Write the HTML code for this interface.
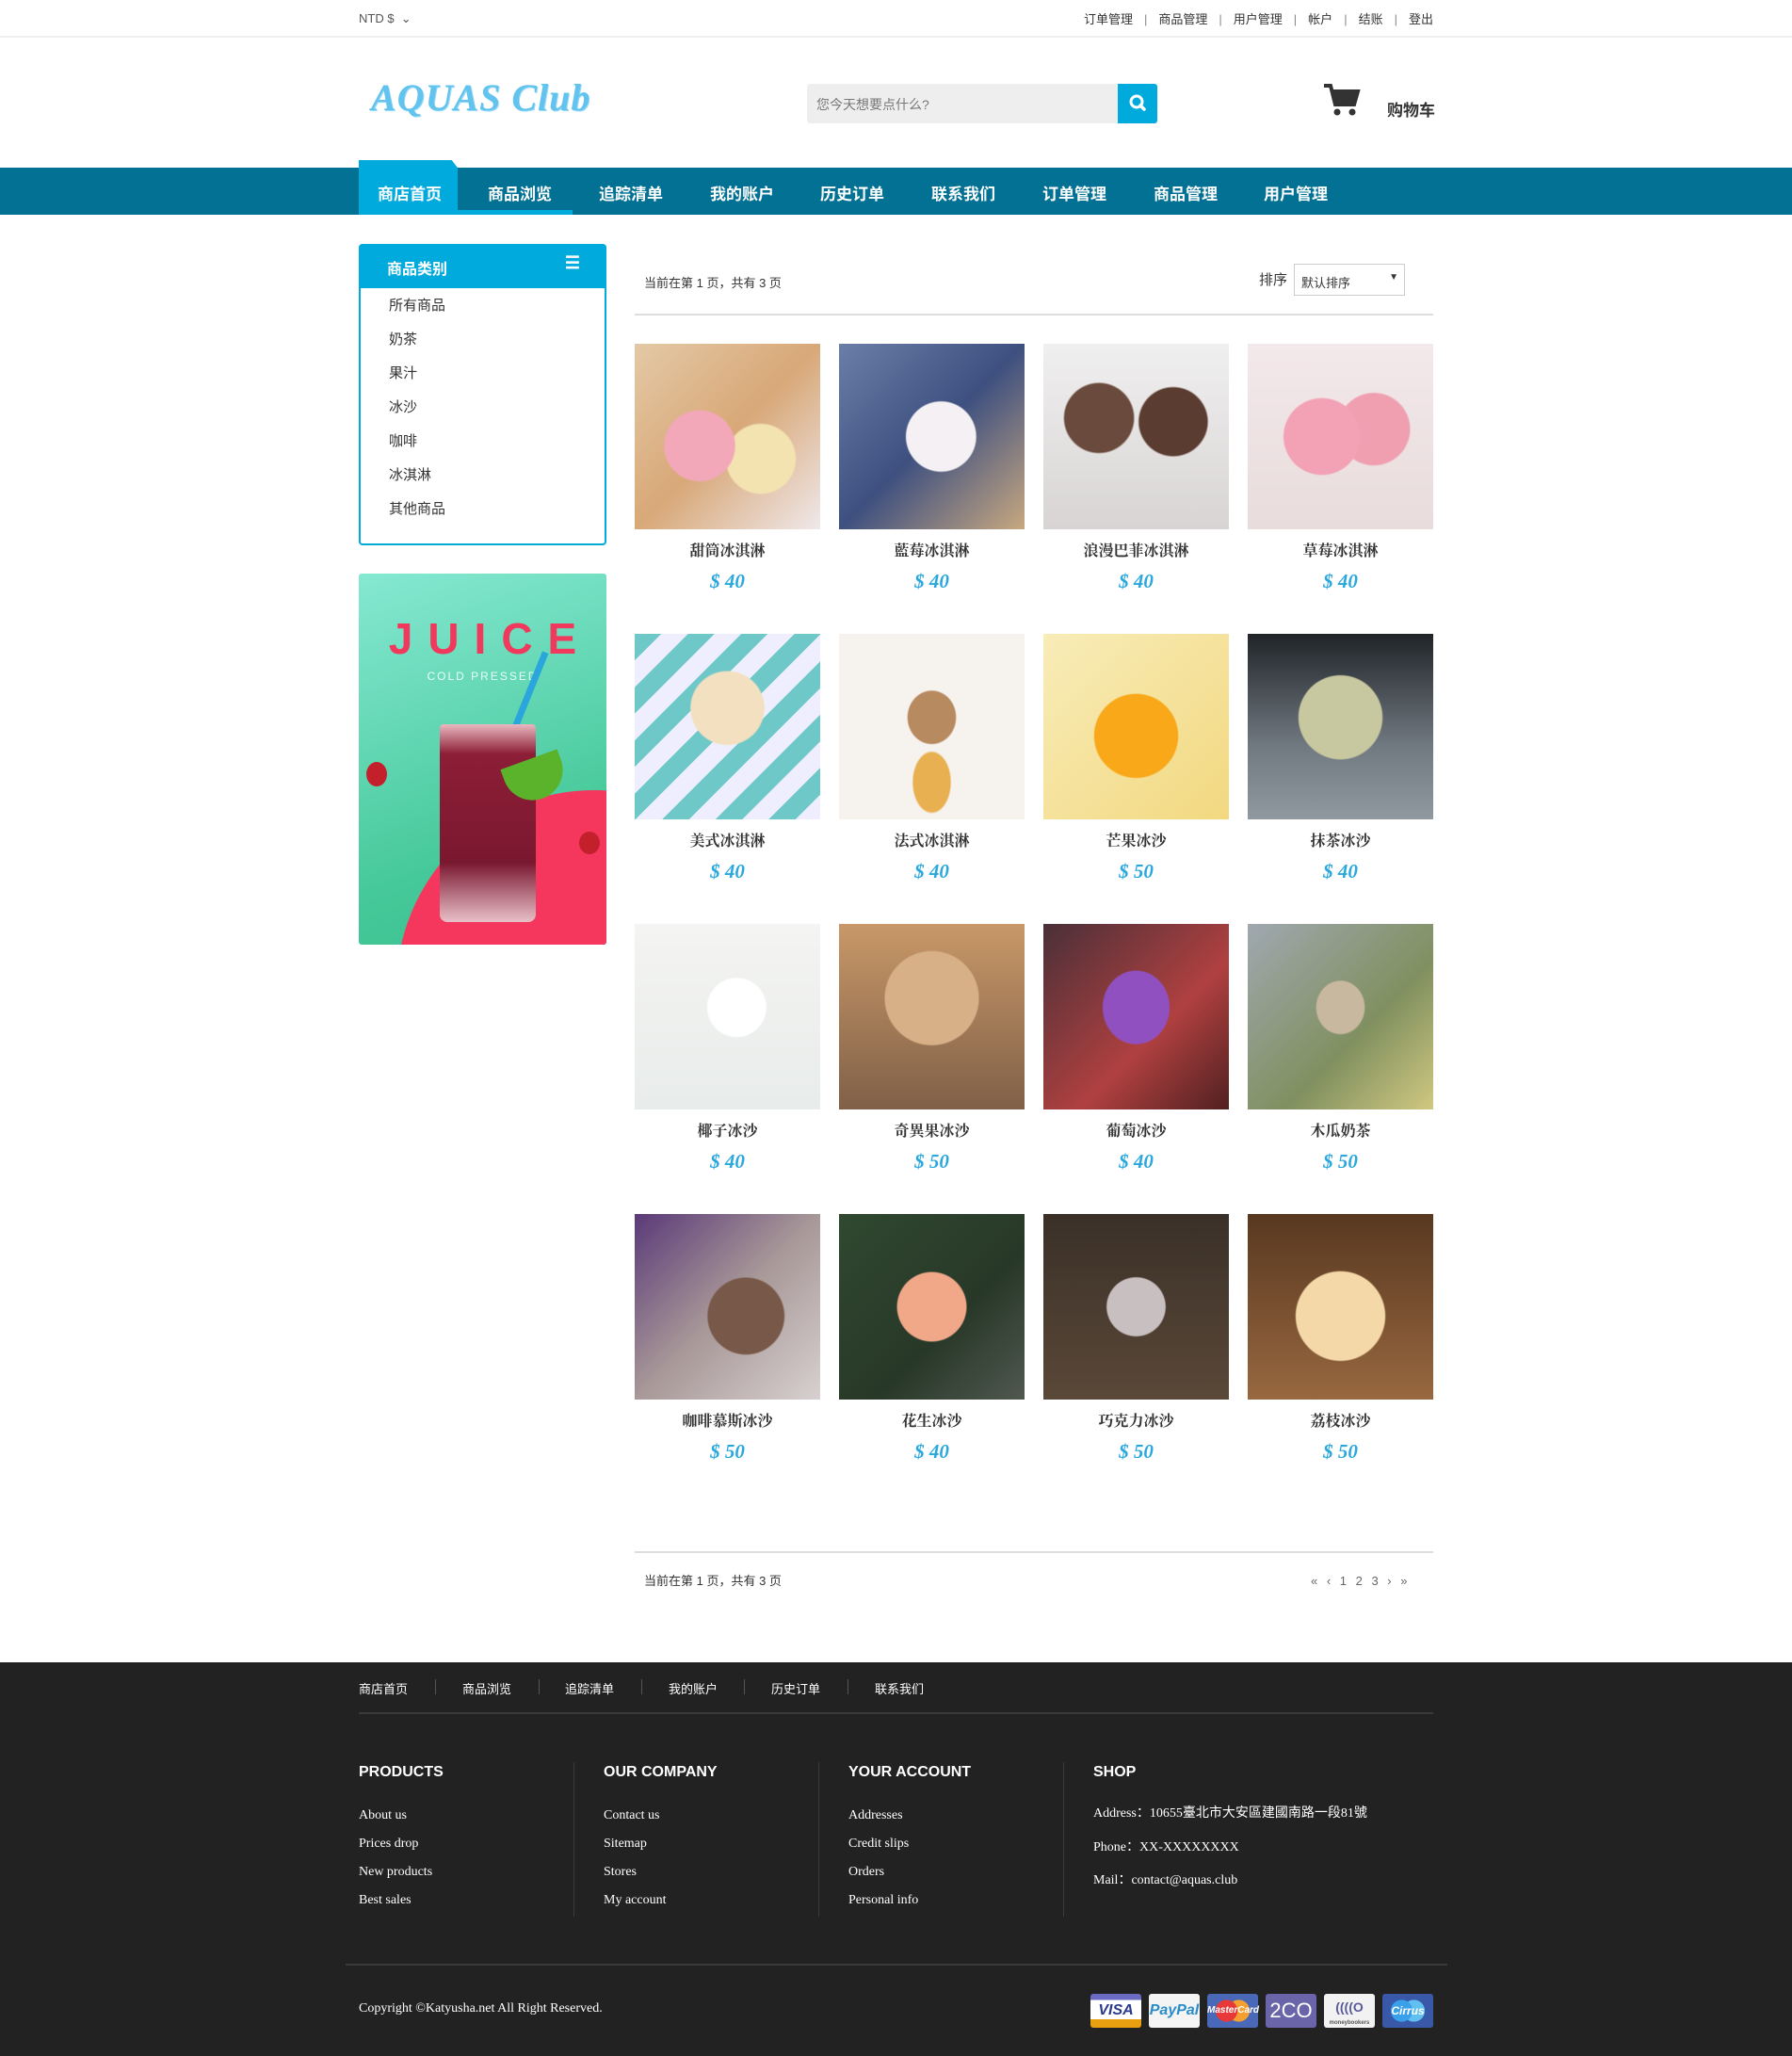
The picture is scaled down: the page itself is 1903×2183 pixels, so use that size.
<!DOCTYPE html>
<html><head><meta charset="utf-8">
<style>
*{margin:0;padding:0;box-sizing:border-box}
body{width:1903px;height:2183px;background:#fff;font-family:"Liberation Sans","Noto Sans CJK SC",sans-serif;color:#333;position:relative;overflow:hidden}
.abs{position:absolute}
.topbar{left:0;top:0;width:1903px;height:40px;border-bottom:2px solid #f0f0f0}
.logo{left:394px;top:80px;font-family:"Liberation Serif",serif;font-style:italic;font-weight:bold;font-size:40px;color:#62c4ee;letter-spacing:1px;text-shadow:1px 1px 0 #9ad9f5}
.search{left:857px;top:89px;width:330px;height:42px;background:#eee;border-radius:3px 0 0 3px;font-size:14px;color:#777;padding:12px 10px}
.sbtn{left:1187px;top:89px;width:42px;height:42px;background:#00aadd;border-radius:0 3px 3px 0}
.nav{left:0;top:178px;width:1903px;height:50px;background:#027194}
.navtab{left:381px;top:170px;width:105px;height:58px;background:#00aadd;clip-path:polygon(0 0,94% 0,100% 14%,100% 100%,0 100%)}
.navul{left:486px;top:223px;width:122px;height:5px;background:#00aadd}
.ni{top:192px;font-size:17px;font-weight:bold;color:#fff}
.side{left:381px;top:259px;width:263px;height:320px;border:2px solid #00aadd;border-radius:4px}
.sideh{left:381px;top:259px;width:263px;height:47px;background:#00aadd;border-radius:4px 4px 0 0;color:#fff;font-weight:bold;font-size:16px;padding:13px 0 0 30px}
.side li{list-style:none;position:absolute;left:30px;font-size:15px;color:#333}
.banner{left:381px;top:609px;width:263px;height:394px;border-radius:3px;overflow:hidden;background:linear-gradient(160deg,#86e8d2,#46c99a 70%,#3cc090)}
.ptxt{font-size:13px;color:#333}
.hr{height:2px;background:#ddd}
.prod{width:197px;height:197px}
.pname{width:197px;text-align:center;font-size:16px;color:#333;font-family:"Liberation Serif","Noto Serif CJK SC",serif;font-weight:bold}
.price{width:197px;text-align:center;font-family:"Liberation Serif",serif;font-style:italic;font-weight:bold;font-size:21px;color:#2aa8de}
.foot{left:0;top:1765px;width:1903px;height:418px;background:#222}
.fl{top:1783px;font-size:13px;color:#fff}
.fsep{top:1783px;width:1px;height:16px;background:#555}
.fh{top:1873px;font-size:16px;font-weight:bold;color:#fff}
.fi{font-family:"Liberation Serif",serif;font-size:14px;color:#fff}
.fdiv{top:1871px;width:1px;height:164px;background:#3a3a3a}
.pay{top:2117px;width:54px;height:36px;border-radius:3px;font-weight:bold;font-style:italic;text-align:center;line-height:36px;font-size:16px}
</style></head><body>

<div class="abs topbar"></div>
<div class="abs" style="left:381px;top:12px;font-size:13px;color:#555">NTD $ &nbsp;⌄</div>
<div class="abs" style="right:381px;top:10px;font-size:13px;color:#333">订单管理<span style="color:#888;margin:0 12px">|</span>商品管理<span style="color:#888;margin:0 12px">|</span>用户管理<span style="color:#888;margin:0 12px">|</span>帐户<span style="color:#888;margin:0 12px">|</span>结账<span style="color:#888;margin:0 12px">|</span>登出</div>

<div class="abs logo">AQUAS Club</div>
<div class="abs search">您今天想要点什么?</div>
<div class="abs sbtn"><svg width="42" height="42" viewBox="0 0 42 42"><circle cx="20" cy="19" r="6" fill="none" stroke="#fff" stroke-width="3"/><line x1="24" y1="23" x2="28" y2="27" stroke="#fff" stroke-width="3.5" stroke-linecap="round"/></svg></div>
<svg class="abs" style="left:1405px;top:88px" width="40" height="36" viewBox="0 0 40 36"><path d="M1 3h7l5 20h20l4-14H11" fill="none" stroke="#333" stroke-width="4"/><path d="M11 9h26l-4 14H13z" fill="#333"/><circle cx="15" cy="31" r="3.5" fill="#333"/><circle cx="31" cy="31" r="3.5" fill="#333"/></svg>
<div class="abs" style="left:1473px;top:103px;font-size:17px;font-weight:bold;color:#333">购物车</div>

<div class="abs nav"></div>
<div class="abs navtab"></div>
<div class="abs navul"></div>
<div class="abs ni" style="left:401px">商店首页</div>
<div class="abs ni" style="left:518px">商品浏览</div>
<div class="abs ni" style="left:636px">追踪清单</div>
<div class="abs ni" style="left:754px">我的账户</div>
<div class="abs ni" style="left:871px">历史订单</div>
<div class="abs ni" style="left:989px">联系我们</div>
<div class="abs ni" style="left:1107px">订单管理</div>
<div class="abs ni" style="left:1225px">商品管理</div>
<div class="abs ni" style="left:1342px">用户管理</div>

<div class="abs side"><ul>
<li style="top:52px">所有商品</li><li style="top:88px">奶茶</li><li style="top:124px">果汁</li><li style="top:160px">冰沙</li><li style="top:196px">咖啡</li><li style="top:232px">冰淇淋</li><li style="top:268px">其他商品</li></ul></div>
<div class="abs sideh">商品类别<span style="position:absolute;right:28px;top:10px;font-size:18px">☰</span></div>

<div class="abs banner">
<div class="abs" style="top:230px;width:420px;height:420px;border-radius:50%;background:#f5375e;left:40px"></div>
<div class="abs" style="left:0;top:42px;width:263px;text-align:center;font-size:46px;font-weight:bold;color:#f0395c;letter-spacing:16px;padding-left:16px">JUICE</div>
<div class="abs" style="left:0;top:102px;width:263px;text-align:center;font-size:12px;color:#e8fff6;letter-spacing:2px">COLD PRESSED</div>
<div class="abs" style="left:176px;top:80px;width:7px;height:100px;background:#2aa6dc;transform:rotate(22deg)"></div>
<div class="abs" style="left:86px;top:160px;width:102px;height:210px;background:linear-gradient(#e9b8c0 0,#8c1e36 15%,#7a1830 70%,#e8c0c8);border-radius:4px 4px 8px 8px"></div>
<div class="abs" style="left:156px;top:196px;width:64px;height:44px;border-radius:0 0 40px 40px;background:#5ab32a;transform:rotate(-20deg)"></div>
<div class="abs" style="left:8px;top:200px;width:22px;height:26px;border-radius:50%;background:#c4202c"></div>
<div class="abs" style="left:234px;top:274px;width:22px;height:24px;border-radius:50%;background:#c4202c"></div>
</div>

<div class="abs ptxt" style="left:684px;top:290px">当前在第 1 页，共有 3 页</div>
<div class="abs" style="left:1337px;top:286px;font-size:15px">排序</div>
<div class="abs" style="left:1374px;top:280px;width:118px;height:34px;border:1px solid #ccc;font-size:13px;padding:9px 7px">默认排序<span style="position:absolute;right:6px;top:8px;font-size:10px">▼</span></div>
<div class="abs hr" style="left:674px;top:333px;width:848px"></div>

<div class="abs prod" style="left:674px;top:365px;background:radial-gradient(circle at 35% 55%,#f2a8b8 0 22%,transparent 23%),radial-gradient(circle at 68% 62%,#f3e3b0 0 20%,transparent 21%),linear-gradient(135deg,#e4c9a6,#d8a878 50%,#efe8ea)"></div>
<div class="abs prod" style="left:891px;top:365px;background:radial-gradient(circle at 55% 50%,#f4f0f4 0 25%,transparent 26%),linear-gradient(135deg,#6b7ea8,#3e5080 50%,#c8a880)"></div>
<div class="abs prod" style="left:1108px;top:365px;background:radial-gradient(circle at 30% 40%,#6a4a3c 0 20%,transparent 21%),radial-gradient(circle at 70% 42%,#5a3c30 0 20%,transparent 21%),linear-gradient(#f0efef,#d8d4d4)"></div>
<div class="abs prod" style="left:1325px;top:365px;background:radial-gradient(circle at 40% 50%,#f2a2b4 0 26%,transparent 27%),radial-gradient(circle at 68% 46%,#ef9fb0 0 22%,transparent 23%),linear-gradient(#f3e8ea,#e8dcdc)"></div>

<div class="abs prod" style="left:674px;top:673px;background:radial-gradient(circle at 50% 40%,#f3e0c0 0 25%,transparent 26%),repeating-linear-gradient(135deg,#6fc8c8 0 20px,#eef 20px 40px)"></div>
<div class="abs prod" style="left:891px;top:673px;background:radial-gradient(ellipse at 50% 45%,#b88a60 0 18%,transparent 19%),radial-gradient(ellipse at 50% 80%,#e8b050 0 14%,transparent 15%),#f6f2ee"></div>
<div class="abs prod" style="left:1108px;top:673px;background:radial-gradient(circle at 50% 55%,#f8a818 0 30%,transparent 31%),linear-gradient(135deg,#f8ecb8,#f2d880)"></div>
<div class="abs prod" style="left:1325px;top:673px;background:radial-gradient(circle at 50% 45%,#c8c8a0 0 30%,transparent 31%),linear-gradient(#202428,#707880 60%,#9098a0)"></div>

<div class="abs prod" style="left:674px;top:981px;background:radial-gradient(ellipse at 55% 45%,#fff 0 20%,transparent 21%),linear-gradient(#f4f4f2,#e8ecea)"></div>
<div class="abs prod" style="left:891px;top:981px;background:radial-gradient(circle at 50% 40%,#d8b088 0 32%,transparent 33%),linear-gradient(#c89868,#806048)"></div>
<div class="abs prod" style="left:1108px;top:981px;background:radial-gradient(ellipse at 50% 45%,#9050c0 0 25%,transparent 26%),linear-gradient(135deg,#4a3038,#b04040 60%,#502020)"></div>
<div class="abs prod" style="left:1325px;top:981px;background:radial-gradient(ellipse at 50% 45%,#c8b8a0 0 18%,transparent 19%),linear-gradient(135deg,#a0a8b0,#809060 60%,#d0c880)"></div>

<div class="abs prod" style="left:674px;top:1289px;background:radial-gradient(circle at 60% 55%,#785848 0 25%,transparent 26%),linear-gradient(135deg,#5a3a78,#a89898 50%,#d8d0d0)"></div>
<div class="abs prod" style="left:891px;top:1289px;background:radial-gradient(ellipse at 50% 50%,#f0a888 0 26%,transparent 27%),linear-gradient(135deg,#304830,#283828 60%,#505850)"></div>
<div class="abs prod" style="left:1108px;top:1289px;background:radial-gradient(ellipse at 50% 50%,#c8c0c0 0 22%,transparent 23%),linear-gradient(#3a3028,#5a4838)"></div>
<div class="abs prod" style="left:1325px;top:1289px;background:radial-gradient(circle at 50% 55%,#f4d8a8 0 32%,transparent 33%),linear-gradient(#583820,#986840)"></div>

<div class="abs pname" style="left:674px;top:572px">甜筒冰淇淋</div><div class="abs price" style="left:674px;top:605px">$ 40</div>
<div class="abs pname" style="left:891px;top:572px">藍莓冰淇淋</div><div class="abs price" style="left:891px;top:605px">$ 40</div>
<div class="abs pname" style="left:1108px;top:572px">浪漫巴菲冰淇淋</div><div class="abs price" style="left:1108px;top:605px">$ 40</div>
<div class="abs pname" style="left:1325px;top:572px">草莓冰淇淋</div><div class="abs price" style="left:1325px;top:605px">$ 40</div>

<div class="abs pname" style="left:674px;top:880px">美式冰淇淋</div><div class="abs price" style="left:674px;top:913px">$ 40</div>
<div class="abs pname" style="left:891px;top:880px">法式冰淇淋</div><div class="abs price" style="left:891px;top:913px">$ 40</div>
<div class="abs pname" style="left:1108px;top:880px">芒果冰沙</div><div class="abs price" style="left:1108px;top:913px">$ 50</div>
<div class="abs pname" style="left:1325px;top:880px">抹茶冰沙</div><div class="abs price" style="left:1325px;top:913px">$ 40</div>

<div class="abs pname" style="left:674px;top:1188px">椰子冰沙</div><div class="abs price" style="left:674px;top:1221px">$ 40</div>
<div class="abs pname" style="left:891px;top:1188px">奇異果冰沙</div><div class="abs price" style="left:891px;top:1221px">$ 50</div>
<div class="abs pname" style="left:1108px;top:1188px">葡萄冰沙</div><div class="abs price" style="left:1108px;top:1221px">$ 40</div>
<div class="abs pname" style="left:1325px;top:1188px">木瓜奶茶</div><div class="abs price" style="left:1325px;top:1221px">$ 50</div>

<div class="abs pname" style="left:674px;top:1496px">咖啡慕斯冰沙</div><div class="abs price" style="left:674px;top:1529px">$ 50</div>
<div class="abs pname" style="left:891px;top:1496px">花生冰沙</div><div class="abs price" style="left:891px;top:1529px">$ 40</div>
<div class="abs pname" style="left:1108px;top:1496px">巧克力冰沙</div><div class="abs price" style="left:1108px;top:1529px">$ 50</div>
<div class="abs pname" style="left:1325px;top:1496px">荔枝冰沙</div><div class="abs price" style="left:1325px;top:1529px">$ 50</div>

<div class="abs hr" style="left:674px;top:1647px;width:848px"></div>
<div class="abs ptxt" style="left:684px;top:1668px">当前在第 1 页，共有 3 页</div>
<div class="abs" style="left:1392px;top:1671px;font-size:13px;color:#666;word-spacing:6px">« ‹ 1 2 3 › »</div>

<div class="abs foot"></div>
<div class="abs fl" style="left:381px">商店首页</div><div class="abs fsep" style="left:462px"></div>
<div class="abs fl" style="left:491px">商品浏览</div><div class="abs fsep" style="left:572px"></div>
<div class="abs fl" style="left:600px">追踪清单</div><div class="abs fsep" style="left:681px"></div>
<div class="abs fl" style="left:710px">我的账户</div><div class="abs fsep" style="left:790px"></div>
<div class="abs fl" style="left:819px">历史订单</div><div class="abs fsep" style="left:900px"></div>
<div class="abs fl" style="left:929px">联系我们</div>
<div class="abs" style="left:381px;top:1818px;width:1141px;height:2px;background:#3a3a3a"></div>

<div class="abs fh" style="left:381px">PRODUCTS</div>
<div class="abs fh" style="left:641px">OUR COMPANY</div>
<div class="abs fh" style="left:901px">YOUR ACCOUNT</div>
<div class="abs fh" style="left:1161px">SHOP</div>
<div class="abs fdiv" style="left:609px"></div><div class="abs fdiv" style="left:869px"></div><div class="abs fdiv" style="left:1129px"></div>

<div class="abs fi" style="left:381px;top:1920px">About us</div>
<div class="abs fi" style="left:381px;top:1950px">Prices drop</div>
<div class="abs fi" style="left:381px;top:1980px">New products</div>
<div class="abs fi" style="left:381px;top:2010px">Best sales</div>
<div class="abs fi" style="left:641px;top:1920px">Contact us</div>
<div class="abs fi" style="left:641px;top:1950px">Sitemap</div>
<div class="abs fi" style="left:641px;top:1980px">Stores</div>
<div class="abs fi" style="left:641px;top:2010px">My account</div>
<div class="abs fi" style="left:901px;top:1920px">Addresses</div>
<div class="abs fi" style="left:901px;top:1950px">Credit slips</div>
<div class="abs fi" style="left:901px;top:1980px">Orders</div>
<div class="abs fi" style="left:901px;top:2010px">Personal info</div>
<div class="abs fi" style="left:1161px;top:1914px">Address：10655臺北市大安區建國南路一段81號</div>
<div class="abs fi" style="left:1161px;top:1950px">Phone：XX-XXXXXXXX</div>
<div class="abs fi" style="left:1161px;top:1985px">Mail：contact@aquas.club</div>

<div class="abs" style="left:367px;top:2085px;width:1170px;height:2px;background:#3a3a3a"></div>
<div class="abs fi" style="left:381px;top:2125px;font-size:14px">Copyright ©Katyusha.net All Right Reserved.</div>

<div class="abs pay" style="left:1158px;background:linear-gradient(#6b6bc4 0 18%,#fff 18% 75%,#e8a010 75%);color:#2a3a8c">VISA</div>
<div class="abs pay" style="left:1220px;background:#f4f4f4;color:#2a8cc8">PayPal</div>
<div class="abs pay" style="left:1282px;background:radial-gradient(circle at 38% 50%,#e83838 0 30%,transparent 31%),radial-gradient(circle at 62% 50%,#f4a030 0 30%,transparent 31%),#4a68b8;color:#fff;font-size:10px">MasterCard</div>
<div class="abs pay" style="left:1344px;background:#6a64a8;color:#fff;font-style:normal;font-weight:normal;font-size:22px">2CO</div>
<div class="abs pay" style="left:1406px;background:#f2f2f2;color:#5a5a98;font-style:normal;font-size:14px;line-height:28px">((((O<div style="font-size:6px;line-height:6px;color:#555">moneybookers</div></div>
<div class="abs pay" style="left:1468px;background:radial-gradient(circle at 38% 50%,#3aa0ea 0 30%,transparent 31%),radial-gradient(circle at 62% 50%,#60c0f0 0 30%,transparent 31%),#3a58a8;color:#fff;font-size:12px">Cirrus</div>

</body></html>
